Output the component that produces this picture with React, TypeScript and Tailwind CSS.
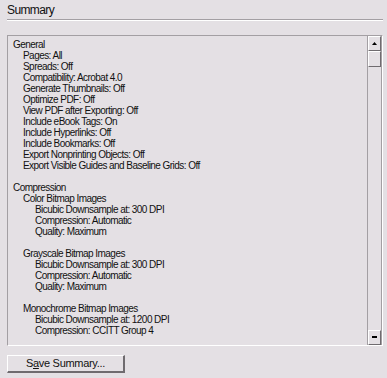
import React from 'react';

type Line = { text: string; level: number };

const lines: (Line | null)[] = [
  { text: 'General', level: 0 },
  { text: 'Pages: All', level: 1 },
  { text: 'Spreads: Off', level: 1 },
  { text: 'Compatibility: Acrobat 4.0', level: 1 },
  { text: 'Generate Thumbnails: Off', level: 1 },
  { text: 'Optimize PDF: Off', level: 1 },
  { text: 'View PDF after Exporting: Off', level: 1 },
  { text: 'Include eBook Tags: On', level: 1 },
  { text: 'Include Hyperlinks: Off', level: 1 },
  { text: 'Include Bookmarks: Off', level: 1 },
  { text: 'Export Nonprinting Objects: Off', level: 1 },
  { text: 'Export Visible Guides and Baseline Grids: Off', level: 1 },
  null,
  { text: 'Compression', level: 0 },
  { text: 'Color Bitmap Images', level: 1 },
  { text: 'Bicubic Downsample at: 300 DPI', level: 2 },
  { text: 'Compression: Automatic', level: 2 },
  { text: 'Quality: Maximum', level: 2 },
  null,
  { text: 'Grayscale Bitmap Images', level: 1 },
  { text: 'Bicubic Downsample at: 300 DPI', level: 2 },
  { text: 'Compression: Automatic', level: 2 },
  { text: 'Quality: Maximum', level: 2 },
  null,
  { text: 'Monochrome Bitmap Images', level: 1 },
  { text: 'Bicubic Downsample at: 1200 DPI', level: 2 },
  { text: 'Compression: CCITT Group 4', level: 2 },
];

const indent = ['pl-0', 'pl-[10px]', 'pl-[22px]'];

function ScrollButton({ up }: { up: boolean }) {
  return (
    <div className="w-[13px] h-[15px] bg-[#e4e0e4] border-t border-l border-t-white border-l-white border-b border-r border-b-[#6f6b6f] border-r-[#6f6b6f] flex items-center justify-center">
      <svg width="5" height="3" viewBox="0 0 5 3">
        {up ? <path d="M2.5 0 L5 3 L0 3 Z" fill="#000" /> : <path d="M0 0 H5 V2 H0 Z" fill="#000" />}
      </svg>
    </div>
  );
}

export default function App() {
  return (
    <div className="w-[387px] h-[378px] bg-[#e4e0e4] overflow-hidden text-[#111]" style={{ fontFamily: '"Liberation Sans", Arial, sans-serif' }}>
      <div className="pl-[7px] pt-[3px] text-[12px] leading-[15px] h-[19px] tracking-[-0.6px]">Summary</div>
      <div className="ml-[7px] mr-[4px] border-t border-t-[#a39fa3] border-b border-b-white" />

      <div className="ml-[7px] mt-[14px] w-[376px] h-[311px] flex border-t border-l border-t-[#a39fa3] border-l-[#a39fa3] border-b border-b-white border-r border-r-white">
        <div className="flex-1 pl-[5px] pt-[3px] text-[10px] leading-[11px] tracking-[-0.55px] overflow-hidden">
          {lines.map((l, i) =>
            l ? (
              <div key={i} className={`${indent[l.level]} whitespace-nowrap`}>{l.text}</div>
            ) : (
              <div key={i} className="h-[11px]" />
            )
          )}
        </div>
        <div className="w-[15px] flex flex-col border-l border-l-[#a39fa3] border-r border-r-[#a39fa3]">
          <ScrollButton up />
          <div className="w-[13px] h-[16px] border-t border-l border-t-white border-l-white border-b border-r border-b-[#6f6b6f] border-r-[#6f6b6f]" />
          <div className="flex-1" />
          <ScrollButton up={false} />
        </div>
      </div>

      <div className="ml-[7px] mt-[9px] w-[118px] h-[18px] border-t border-l border-t-white border-l-white border-b-2 border-r-2 border-b-[#6f6b6f] border-r-[#6f6b6f] flex items-center justify-center text-[11px] tracking-[-0.3px]">
        <span>
          S<span className="underline">a</span>ve Summary...
        </span>
      </div>
    </div>
  );
}
